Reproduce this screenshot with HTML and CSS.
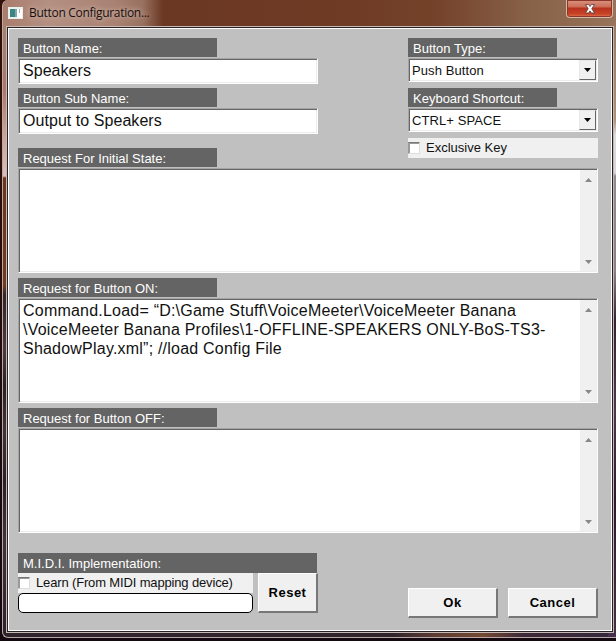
FILE: index.html
```html
<!DOCTYPE html>
<html lang="en">
<head>
<meta charset="utf-8">
<title>Button Configuration...</title>
<link rel="stylesheet" href="styles.css">
</head>
<body>
<div class="window">
  <header class="titlebar">
    <svg class="app-icon" width="15" height="12" viewBox="0 0 15 12"><path fill="#e8efed" d="M0 0h15v12H0z"/><path fill="#3c8580" d="M2 2h5v8H2z"/><path fill="#80a8ad" d="M7 2h2v8H7z"/><path fill="#fff" d="M9 2h5v9H9z"/><path fill="#9db7b0" d="M11 2h1v4h-1z"/></svg>
    <h1 class="title">Button Configuration...</h1>
    <button class="close" aria-label="Close"><svg width="12" height="10" viewBox="0 0 12 10"><path d="M1.5.5h3L6 2.5 7.500.5h3L7.800 4.800 10.600 9H7.500L6 6.900 4.500 9h-3.100l2.800-4.200z" fill="#fff" stroke="#54393b" stroke-width=".8"/></svg></button>
  </header>
  <main class="client">
    <section class="top">
      <div class="names">
        <div class="label">Button Name:</div>
        <div class="input">Speakers</div>
        <div class="label">Button Sub Name:</div>
        <div class="input">Output to Speakers</div>
      </div>
      <div class="options">
        <div class="label">Button Type:</div>
        <div class="select"><span>Push Button</span><i class="drop"><svg width="7" height="4"><path d="M0 0h7L3.500 4z"/></svg></i></div>
        <div class="label">Keyboard Shortcut:</div>
        <div class="select"><span>CTRL+ SPACE</span><i class="drop"><svg width="7" height="4"><path d="M0 0h7L3.500 4z"/></svg></i></div>
        <div class="check"><i class="box"></i><span class="exclusive">Exclusive Key</span></div>
      </div>
    </section>
    <section class="request">
      <div class="label">Request For Initial State:</div>
      <div class="area"><div class="code"></div><div class="scroll"><svg width="7" height="4"><path d="M3.500 0L7 4H0z"/></svg><svg width="7" height="4"><path d="M0 0h7L3.500 4z"/></svg></div></div>
    </section>
    <section class="request">
      <div class="label">Request for Button ON:</div>
      <div class="area"><div class="code">Command.Load= “D:\Game Stuff\VoiceMeeter\VoiceMeeter Banana<br>\VoiceMeeter Banana Profiles\1-OFFLINE-SPEAKERS ONLY-BoS-TS3-<br>ShadowPlay.xml”; //load Config File</div><div class="scroll"><svg width="7" height="4"><path d="M3.500 0L7 4H0z"/></svg><svg width="7" height="4"><path d="M0 0h7L3.500 4z"/></svg></div></div>
    </section>
    <section class="request">
      <div class="label">Request for Button OFF:</div>
      <div class="area"><div class="code"></div><div class="scroll"><svg width="7" height="4"><path d="M3.500 0L7 4H0z"/></svg><svg width="7" height="4"><path d="M0 0h7L3.500 4z"/></svg></div></div>
    </section>
    <footer class="bottom">
      <div class="midi">
        <div class="label wide">M.I.D.I. Implementation:</div>
        <div class="midi-row">
          <div class="learn">
            <div class="check"><i class="box"></i><span>Learn (From MIDI mapping device)</span></div>
            <div class="midi-value"></div>
          </div>
          <button class="button reset">Reset</button>
        </div>
      </div>
      <div class="actions">
        <button class="button">Ok</button>
        <button class="button">Cancel</button>
      </div>
    </footer>
  </main>
</div>
</body>
</html>
```

FILE: styles.css
```css
* { box-sizing: border-box; }

body {
  margin: 0;
  width: 616px;
  height: 641px;
  overflow: hidden;
  background: linear-gradient(#34120a 0, #2a0d08 280px, #1b0c10 450px, #160810 100%);
  font: 13px/19px "Liberation Sans", Arial, sans-serif;
  color: #111;
}

.window {
  width: 616px;
  height: 638px;
  margin-left: 2px;
  padding: 0 0 4px 3px;
  border: solid #b8a9a8;
  border-width: 0 0 1px 1px;
  border-radius: 6px 0 0 6px;
  background:
    linear-gradient(90deg, #a97c6c 0, #b39082 45px, #a98273 110px, #98705f 140px, #6b3823 160px, #6e3a24 330px, #744129 430px, #866047 520px, #97745b 100%) 0 0 / 100% 26px no-repeat,
    linear-gradient(#a58473 0, #a97867 90px, #c99e90 130px, #dcc0b7 176px, #6b351d 178px, #713c20 285px, #30262b 295px, #4a3a40 350px, #292126 385px, #40333a 430px, #2c2027 480px, #40323b 540px, #2b222b 100%) 0 0 / 5px 100% no-repeat,
    linear-gradient(#94745f 0, #ad9078 120px, #ddd 135px, #d8d5d8 173px, #918b91 176px, #8c8088 270px, #352431 320px, #4c3849 410px, #2d1b2b 500px, #44304a 100%) 100% 0 / 10px 100% no-repeat,
    linear-gradient(90deg, #30252c 0, #30242b 390px, #5b3b32 430px, #754933 480px, #3d2937 520px, #34283d 100%);
}

.titlebar {
  display: flex;
  align-items: flex-start;
  height: 26px;
}

.app-icon { margin: 7px 0 0 2px; }

.title {
  flex: 1;
  margin: 4px 0 0 6px;
  font: 12px/18px "Open Sans", "Noto Sans", sans-serif;
  letter-spacing: -0.3px;
  color: #17100f;
  text-shadow: 0 0 5px #d0b5aa, 0 0 8px #d0b5aa;
}

.close {
  width: 47px;
  height: 18px;
  margin-right: 5px;
  padding: 0 0 2px;
  border: 1px solid #d7b7a8;
  border-top: 0;
  border-radius: 0 0 4px 4px;
  background: linear-gradient(#d99582 0, #cc6b55 7px, #b6321d 8px, #c94327 14px, #e37a56 100%);
  box-shadow: inset 0 0 0 1px #8b382b;
}

.close svg { display: block; margin: 2px auto 0; }

.client {
  width: 604px;
  height: 603px;
  margin: 2px 0 0 2px;
  padding: 9px 12px 0 9px;
  border: 1px solid #fff;
  outline: 1px solid #292122;
  box-shadow: 0 0 0 2px #c5b8b5;
  background: #c0c0c0;
}

.label {
  width: 199px;
  height: 19px;
  padding: 1px 0 0 5px;
  background: #646464;
  color: #fff;
}

.top {
  display: flex;
  justify-content: space-between;
  width: 580px;
  height: 110px;
}

.names { width: 300px; }
.options { width: 190px; }
.options .label { width: 149px; }

.input, .select, .area {
  padding: 1px;
  border: 1px solid;
  border-color: #a4a4a4 #fff #fff #a4a4a4;
  background: #fff;
  box-shadow: inset 1px 1px #666, inset -1px -1px #ececec;
}

.input {
  height: 26px;
  margin: 1px 0 4px;
  padding: 2px 4px 0;
  font-size: 16px;
  line-height: 20px;
  letter-spacing: .05px;
}

.select {
  display: flex;
  justify-content: space-between;
  height: 24px;
  margin: 1px 0 6px;
  padding-left: 3px;
  line-height: 21px;
  letter-spacing: .1px;
}

.drop {
  display: flex;
  align-items: center;
  justify-content: center;
  width: 17px;
  height: 20px;
  border: 1px solid;
  border-color: #e8e8e8 #666 #666 #e8e8e8;
  background: #f0f0f0;
}

.check {
  display: flex;
  height: 20px;
  background: #f0f0f0;
}

.learn .check { letter-spacing: -.15px; }

.box {
  width: 12px;
  height: 12px;
  margin: 4px 6px 0 0;
  border: 1px solid;
  border-color: #777 #ddd #ddd #999;
  box-shadow: inset 1px 1px #999;
  background: #fff;
}

.request { width: 580px; height: 130px; }

.area {
  display: flex;
  height: 105px;
  margin-top: 1px;
}

.code {
  flex: 1;
  padding: 1px 3px;
  font-size: 16px;
  line-height: 19px;
  letter-spacing: .215px;
  white-space: nowrap;
}

.scroll {
  display: flex;
  flex-direction: column;
  align-items: center;
  justify-content: space-between;
  width: 16px;
  padding: 8px 0 7px;
  background: #f0f0f0;
  fill: #888;
}

.bottom {
  display: flex;
  justify-content: space-between;
  width: 580px;
  padding-top: 15px;
}

.label.wide { width: 299px; height: 20px; }
.midi-row { display: flex; gap: 5px; }
.learn { width: 235px; }

.midi-value {
  height: 20px;
  border: 1px solid #000;
  border-radius: 5px;
  background: #fff;
}

.button {
  width: 90px;
  height: 30px;
  padding: 0;
  border: solid;
  border-width: 1px 2px 2px 1px;
  border-color: #fff #777 #777 #fff;
  background: #f0f0f0;
  color: #000;
  font: bold 13px/18px "Liberation Sans", Arial, sans-serif;
  letter-spacing: .5px;
}

.button.reset { width: 60px; height: 40px; }
.actions { display: flex; gap: 10px; padding-top: 35px; }
```
